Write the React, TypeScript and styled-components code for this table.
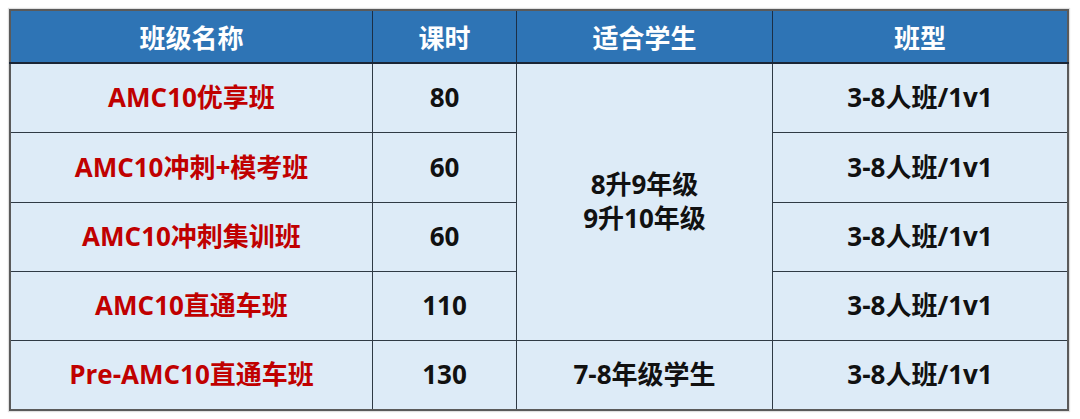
import styled, { createGlobalStyle } from "styled-components";

const GlobalStyle = createGlobalStyle`
  html, body {
    margin: 0;
    padding: 0;
    background: #ffffff;
  }
  body {
    font-family: "Open Sans", "Noto Sans CJK SC", sans-serif;
  }
`;

const Page = styled.div`
  width: 1080px;
  height: 419px;
  padding: 9px 0 0 9px;
  box-sizing: border-box;
`;

const Table = styled.table`
  border-collapse: collapse;
  table-layout: fixed;
  border: 2px solid #5a5a5a;
  box-shadow: 0 0 1px 1px rgba(0, 0, 0, 0.12);
`;

const Th = styled.th<{ $w: number }>`
  width: ${(p) => p.$w}px;
  height: 51px;
  padding: 0;
  background: #2e74b5;
  color: #ffffff;
  font-size: 26px;
  font-weight: 700;
  text-align: center;
  vertical-align: middle;
  border: 1.5px solid #1c2f45;
  border-bottom: 2px solid #1a2535;
`;

const Td = styled.td<{ $red?: boolean }>`
  height: 68.3px;
  padding: 0;
  background: #ddebf7;
  color: ${(p) => (p.$red ? "#c00000" : "#111111")};
  font-size: 26px;
  font-weight: 700;
  text-align: center;
  vertical-align: middle;
  line-height: 1.3;
  border: 1.5px solid #2f3a44;
`;

const columns = [
  { title: "班级名称", w: 361 },
  { title: "课时", w: 143 },
  { title: "适合学生", w: 255 },
  { title: "班型", w: 294 },
];

const rows = [
  { name: "AMC10优享班", hours: "80" },
  { name: "AMC10冲刺+模考班", hours: "60" },
  { name: "AMC10冲刺集训班", hours: "60" },
  { name: "AMC10直通车班", hours: "110" },
];

const App = () => {
  return (
    <Page>
      <GlobalStyle />
      <Table>
        <thead>
          <tr>
            {columns.map((c) => (
              <Th key={c.title} $w={c.w}>
                {c.title}
              </Th>
            ))}
          </tr>
        </thead>
        <tbody>
          {rows.map((r, i) => (
            <tr key={r.name}>
              <Td $red>{r.name}</Td>
              <Td>{r.hours}</Td>
              {i === 0 && (
                <Td rowSpan={4}>
                  8升9年级
                  <br />
                  9升10年级
                </Td>
              )}
              <Td>3-8人班/1v1</Td>
            </tr>
          ))}
          <tr>
            <Td $red>Pre-AMC10直通车班</Td>
            <Td>130</Td>
            <Td>7-8年级学生</Td>
            <Td>3-8人班/1v1</Td>
          </tr>
        </tbody>
      </Table>
    </Page>
  );
};

export default App;
